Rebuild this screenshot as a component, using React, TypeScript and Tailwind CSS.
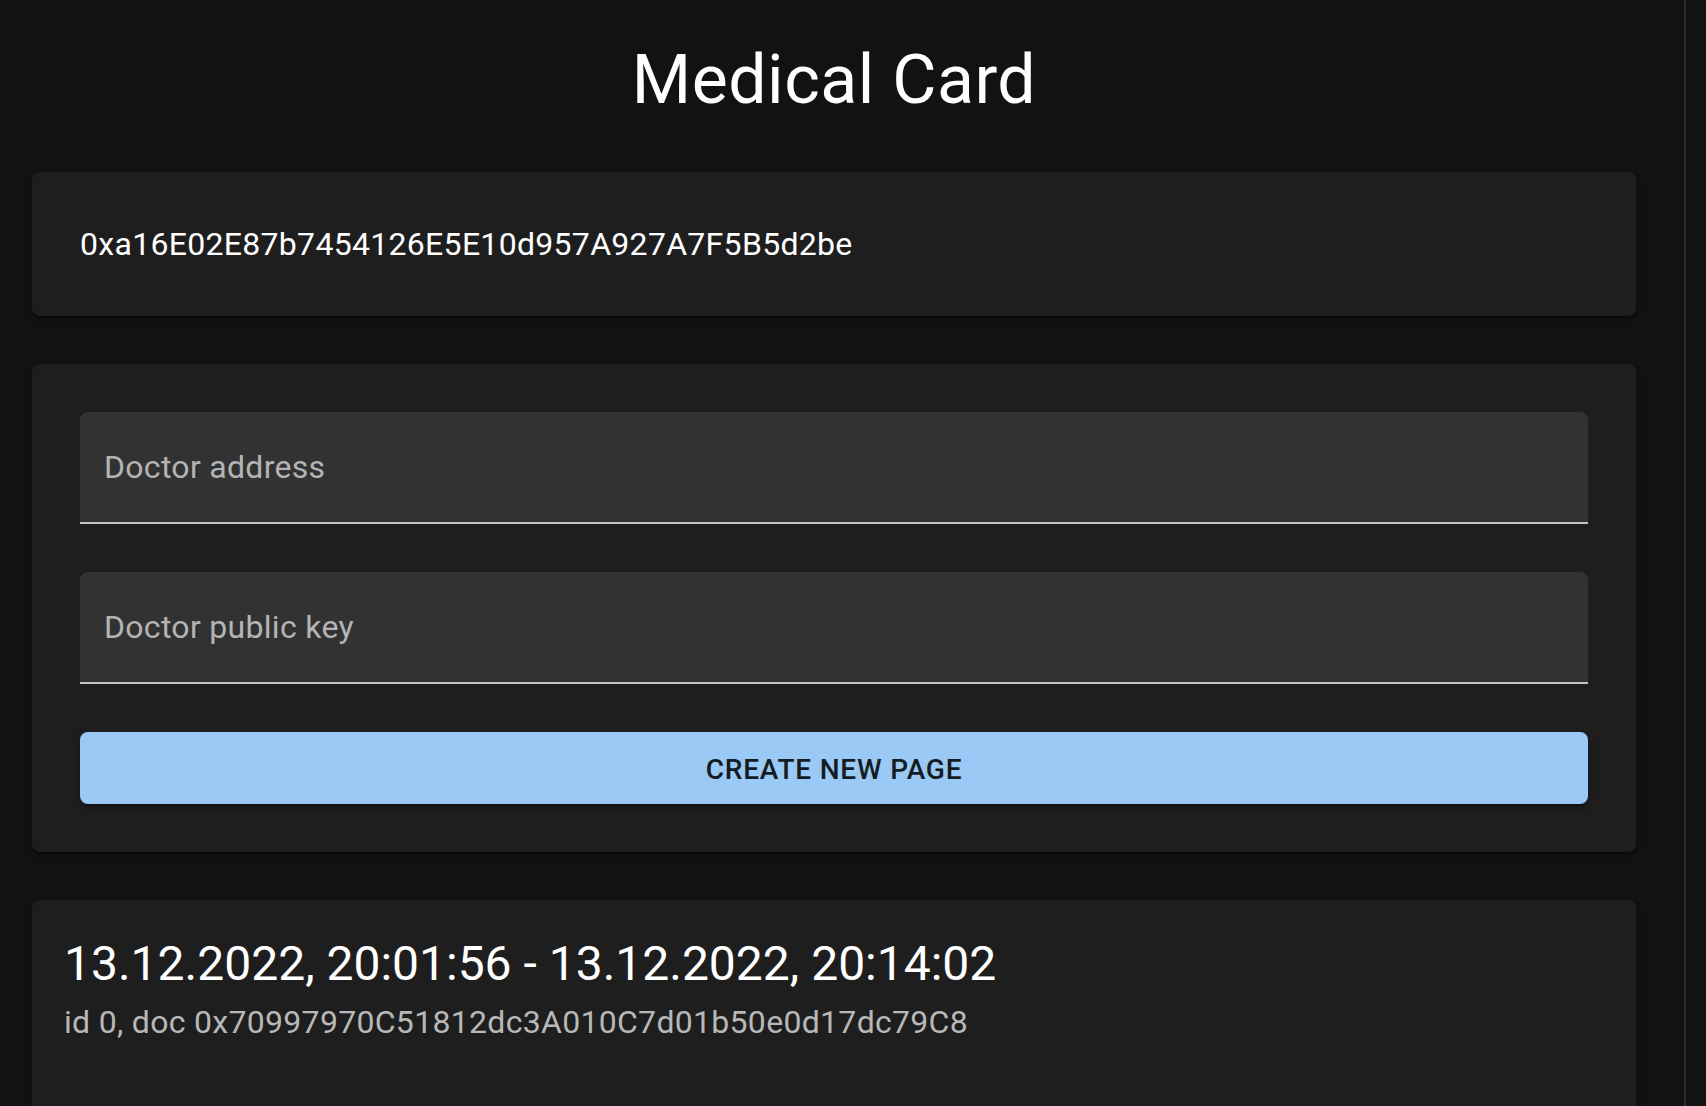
import React from "react";

interface CardPage {
  id: number;
  from: string;
  to: string;
  doctor: string;
}

const account = "0xa16E02E87b7454126E5E10d957A927A7F5B5d2be";

const pages: CardPage[] = [
  {
    id: 0,
    from: "13.12.2022, 20:01:56",
    to: "13.12.2022, 20:14:02",
    doctor: "0x70997970C51812dc3A010C7d01b50e0d17dc79C8",
  },
];

const paper =
  "rounded-lg bg-[#1e1e1e] shadow-[0_4px_2px_-2px_rgba(0,0,0,0.2),0_2px_2px_0_rgba(0,0,0,0.14),0_2px_6px_0_rgba(0,0,0,0.12)]";

const Field = ({ label }: { label: string }) => (
  <div className="relative h-[112px] rounded-t-lg bg-[#323232] border-b-2 border-[#c4c4c4]">
    <input
      className="h-full w-full bg-transparent px-6 pt-[50px] pb-4 text-[32px] text-white outline-none"
      aria-label={label}
    />
    <span className="pointer-events-none absolute left-6 top-8 text-[32px] leading-[46px] tracking-[0.3px] text-[#b4b4b4]">
      {label}
    </span>
  </div>
);

const App = () => {
  return (
    <div className="flex h-screen w-full overflow-hidden bg-[#121212] font-['Roboto',sans-serif] text-white">
      <main className="w-[1684px] shrink-0 pl-8">
        <h1 className="mt-[38px] mb-[50px] w-[1604px] text-center text-[68px] leading-[84px] tracking-[0.5px]">
          Medical Card
        </h1>

        <div className="flex w-[1604px] flex-col gap-12">
          <div className={`${paper} p-12`}>
            <p className="text-[32px] leading-[48px] tracking-[0.3px]">{account}</p>
          </div>

          <div className={`${paper} flex flex-col gap-12 p-12`}>
            <Field label="Doctor address" />
            <Field label="Doctor public key" />
            <button className="h-[72px] rounded-lg bg-[#99c9f4] pt-[3px] text-[28px] font-medium uppercase tracking-[0.8px] text-[#141b22] shadow-[0_6px_2px_-4px_rgba(0,0,0,0.2),0_4px_4px_0_rgba(0,0,0,0.14),0_2px_10px_0_rgba(0,0,0,0.12)]">
              Create new page
            </button>
          </div>

          {pages.map((page) => (
            <div key={page.id} className={`${paper} h-[400px] p-8`}>
              <h2 className="text-[48px] leading-[64px]">
                {page.from} - {page.to}
              </h2>
              <p className="pt-[2px] text-[32px] leading-[48px] tracking-[0.3px] text-[#b8b8b8]">
                id {page.id}, doc {page.doctor}
              </p>
            </div>
          ))}
        </div>
      </main>
      <div className="flex-1 border-l-2 border-[#2b2b2b] bg-[#141414]" />
    </div>
  );
};

export default App;
